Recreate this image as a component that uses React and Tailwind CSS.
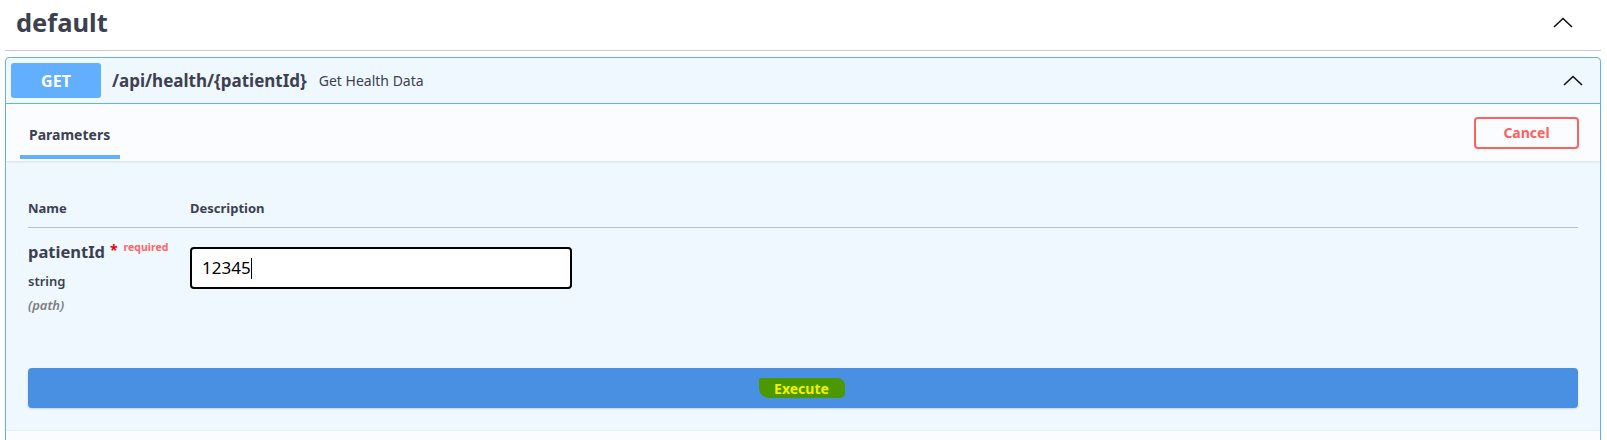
const Chevron = ({ className }) => (
  <svg className={className} width="20" height="11" viewBox="0 0 20 11" fill="none">
    <path d="M1 10L10 1.5L19 10" stroke="#111" strokeWidth="1.6" />
  </svg>
);

export default function App() {
  return (
    <div className="w-[1607px] h-[440px] overflow-hidden bg-white font-['Noto_Sans',sans-serif] text-[#3b4151]">
      <div className="ml-[5px] w-[1596px]">
        {/* tag header */}
        <div className="h-[51px] flex items-center justify-between pl-[11px] pr-[28px] border-b border-[#c8cacf]">
          <h3 className="text-[25.5px] font-bold leading-none -mt-[4px]">default</h3>
          <Chevron className="-mt-[6px]" />
        </div>

        {/* operation block */}
        <div className="mt-[6px] border border-[#61affe] rounded-[4px] bg-[#eff7ff]">
          <div className="flex items-center p-[5px] border-b border-[#61affe]">
            <div className="w-[90px] h-[35px] rounded-[3px] bg-[#61affe] text-white text-[16px] font-bold flex items-center justify-center">
              GET
            </div>
            <span className="ml-[11px] text-[17px] font-bold">/api/health/{"{patientId}"}</span>
            <span className="ml-[12px] text-[14px]">Get Health Data</span>
            <Chevron className="ml-auto mr-[12px]" />
          </div>

          <div className="h-[57px] bg-[#fafcff] flex items-center justify-between shadow-[0_1px_2px_rgba(0,0,0,0.1)]">
            <div className="self-start ml-[14px] w-[100px] h-[55px] pt-[9px] pl-[9px] border-b-4 border-[#61affe] flex items-center">
              <span className="text-[14px] font-bold">Parameters</span>
            </div>
            <button className="mr-[21px] w-[105px] h-[32px] border-2 border-[#ff6060] rounded-[4px] text-[#ff6060] text-[14px] font-bold">
              Cancel
            </button>
          </div>

          <div className="px-[22px] pt-[39px] pb-[23px]">
            <div className="flex pb-[11px] border-b border-[#b7bfcd] text-[13px] font-bold leading-[16px]">
              <div className="w-[162px]">Name</div>
              <div>Description</div>
            </div>

            <div className="flex pt-[14px]">
              <div className="w-[162px]">
                <div className="text-[16.5px] font-bold leading-[20px] whitespace-nowrap">
                  patientId
                  <span className="ml-[5px] text-[14px] text-red-600 relative -top-[3px]">*</span>
                  <span className="ml-[6px] text-[10.5px] text-[#ff6666] relative -top-[7px]">required</span>
                </div>
                <div className="mt-[9px] text-[13px] font-semibold leading-[16px]">string</div>
                <div className="mt-[8px] text-[13px] font-semibold italic text-[#808080] leading-[16px]">(path)</div>
              </div>
              <div className="pt-[5px]">
                <div className="w-[382px] h-[42px] border-2 border-black rounded-[4px] bg-white flex items-center pl-[10px] text-[17px] text-black">
                  12345
                  <span className="w-[1.5px] h-[21px] bg-black" />
                </div>
              </div>
            </div>

            <button className="mt-[55px] w-full h-[40px] rounded-[4px] bg-[#4990e2] shadow-[0_1px_2px_rgba(0,0,0,0.15)] flex items-center justify-center">
              <span className="-ml-[2px] pl-[15px] pr-[16px] h-[20px] flex items-center bg-[#4c9800] rounded-[2px_8px_5px_10px] text-[#f5f000] text-[14px] font-bold">
                Execute
              </span>
            </button>
          </div>

          <div className="h-[20px] bg-[#fafcff] shadow-[0_-1px_2px_rgba(0,0,0,0.05)]" />
        </div>
      </div>
    </div>
  );
}
